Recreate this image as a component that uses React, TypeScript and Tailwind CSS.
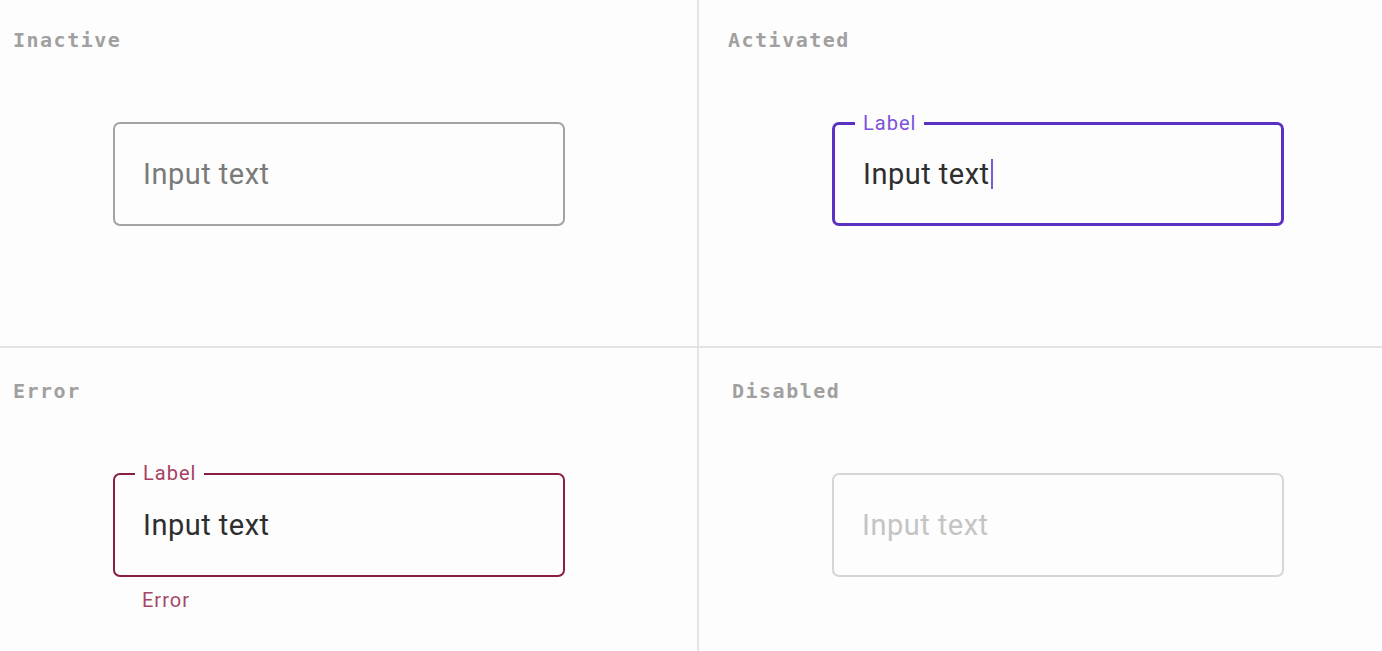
import React from 'react';

type State = 'inactive' | 'activated' | 'error' | 'disabled';

const boxStyles: Record<State, string> = {
  inactive: 'border-2 border-[#a3a3a3]',
  activated: 'border-[3px] border-[#5a31c0]',
  error: 'border-[2.5px] border-[#8a1f3f]',
  disabled: 'border-2 border-[#d6d6d6]',
};

const textStyles: Record<State, string> = {
  inactive: 'text-[#7a7a7a]',
  activated: 'text-[#2e2e2e]',
  error: 'text-[#2e2e2e]',
  disabled: 'text-[#c4c4c4]',
};

function Field({ state }: { state: State }) {
  const label = state === 'activated' || state === 'error';
  return (
    <div className="w-[452px]">
      <div
        className={`relative flex h-[104px] items-center rounded-[7px] bg-[#fdfdfd] pl-[28px] ${boxStyles[state]}`}
      >
        {label && (
          <span
            className={`absolute -top-[15px] left-[20px] bg-[#fdfdfd] px-[8px] text-[20px] leading-[26px] tracking-[1px] ${
              state === 'activated' ? 'text-[#7a52dc]' : 'text-[#a6405f]'
            }`}
          >
            Label
          </span>
        )}
        <span className={`text-[29px] leading-[34px] tracking-[0.5px] ${textStyles[state]}`}>Input text</span>
        {state === 'activated' && <span className="ml-[1px] h-[30px] w-[2px] bg-[#7a5ad8]" />}
      </div>
      {state === 'error' && (
        <p className="mt-[10px] pl-[29px] text-[20px] leading-[26px] tracking-[1px] text-[#a5476a]">Error</p>
      )}
    </div>
  );
}

function Cell({
  title,
  state,
  className,
  titleClass,
  fieldClass,
}: {
  title: string;
  state: State;
  className: string;
  titleClass: string;
  fieldClass: string;
}) {
  return (
    <section className={`border-[#e3e3e3] ${className}`}>
      <h2
        className={`font-['DejaVu_Sans_Mono',monospace] text-[20px] font-bold leading-[26px] tracking-[1.5px] text-[#a0a0a0] ${titleClass}`}
      >
        {title}
      </h2>
      <div className={fieldClass}>
        <Field state={state} />
      </div>
    </section>
  );
}

export default function App() {
  return (
    <div className="grid h-[651px] w-[1382px] grid-cols-[699px_1fr] grid-rows-[348px_1fr] overflow-hidden bg-[#fdfdfd] font-['Roboto',sans-serif]">
      <Cell
        title="Inactive"
        state="inactive"
        className="border-r-2 border-b-2"
        titleClass="pl-[13px] pt-[27px]"
        fieldClass="mt-[69px] pl-[113px]"
      />
      <Cell
        title="Activated"
        state="activated"
        className="border-b-2"
        titleClass="pl-[29px] pt-[27px]"
        fieldClass="mt-[69px] pl-[133px]"
      />
      <Cell
        title="Error"
        state="error"
        className="border-r-2"
        titleClass="pl-[13px] pt-[30px]"
        fieldClass="mt-[69px] pl-[113px]"
      />
      <Cell
        title="Disabled"
        state="disabled"
        className=""
        titleClass="pl-[33px] pt-[30px]"
        fieldClass="mt-[69px] pl-[133px]"
      />
    </div>
  );
}
